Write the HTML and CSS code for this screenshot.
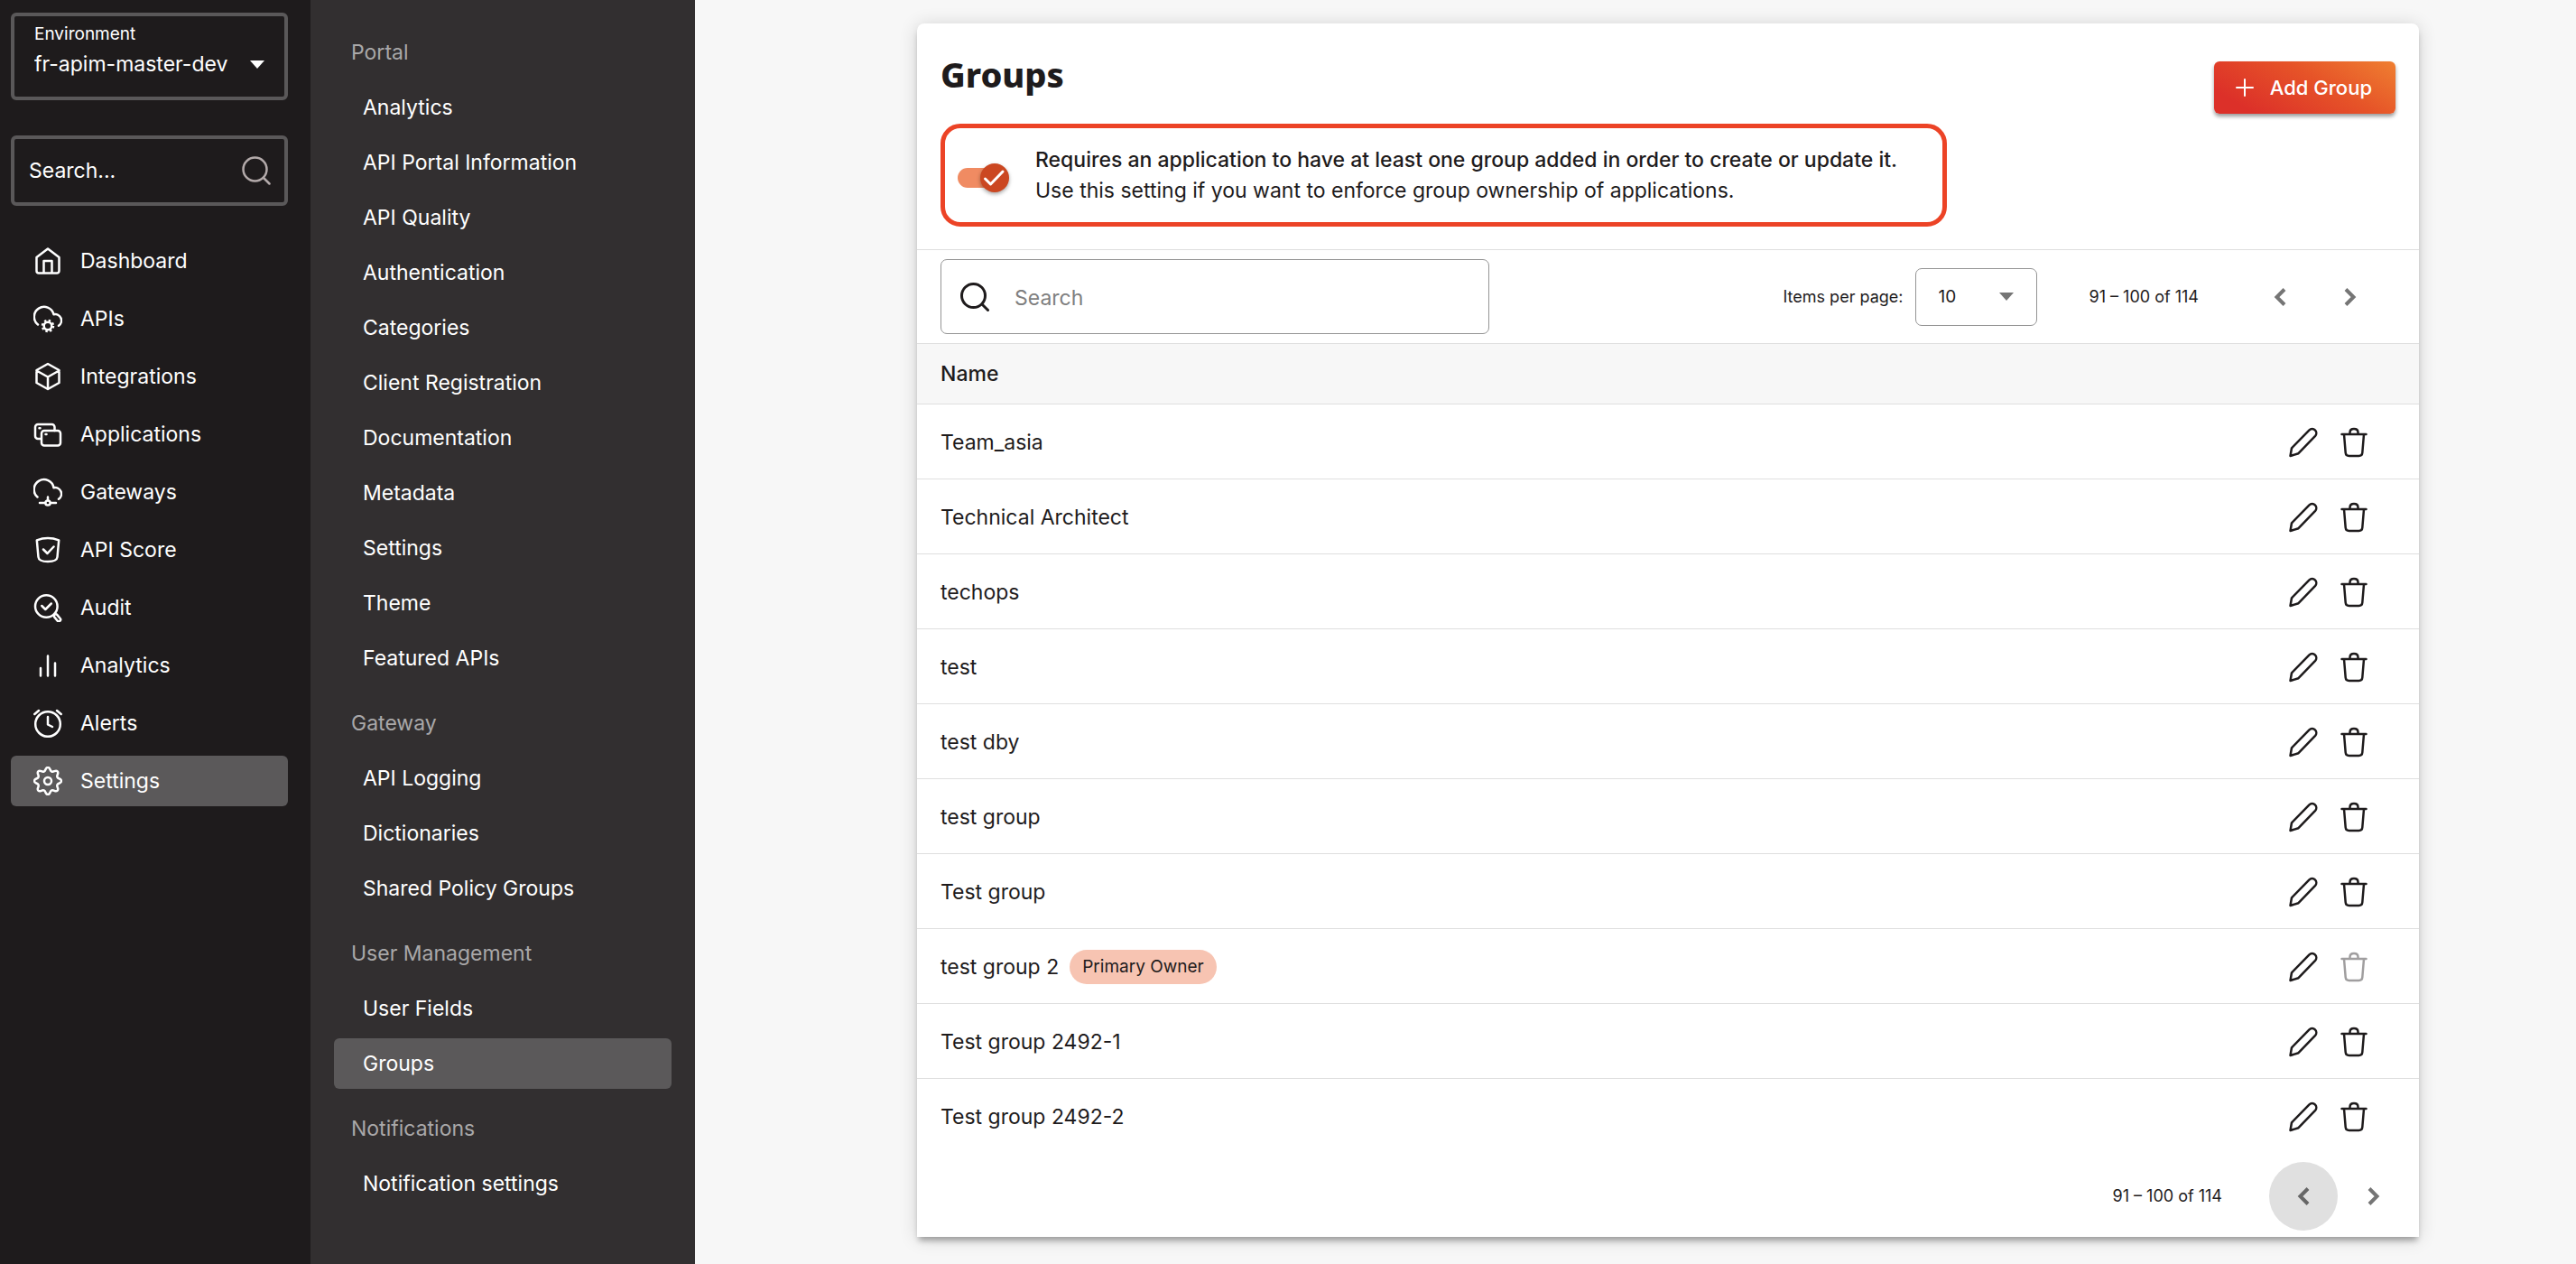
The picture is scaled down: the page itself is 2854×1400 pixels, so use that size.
FILE: index.html
```
<!DOCTYPE html>
<html lang="en">
<head>
<meta charset="utf-8">
<title>Groups</title>
<link rel="stylesheet" href="styles.css">
</head>
<body>
<svg class="sprite" aria-hidden="true">
  <symbol id="i-home" viewBox="0 0 32 32"><path d="M3.5 12 16 2.5 28.5 12v15a2.5 2.5 0 0 1-2.5 2.5H6A2.5 2.5 0 0 1 3.5 27ZM11.5 29.500V16h9v13.500"/></symbol>
  <symbol id="i-api" viewBox="0 0 32 32"><path d="M5 22.500A11 11 0 1 1 22.500 11.200a7 7 0 0 1 5.500 12.600"/><circle cx="16" cy="24" r="4.300"/><circle cx="16" cy="24" r="6" stroke-dasharray="2.350 2.362" stroke-linecap="butt"/></symbol>
  <symbol id="i-cube" viewBox="0 0 32 32"><path d="M16 2 28.500 9v14L16 30 3.500 23V9ZM3.500 9.500 16 16.500l12.500-7M16 16.500V30"/></symbol>
  <symbol id="i-apps" viewBox="0 0 32 32"><path d="M8.500 21H5a3 3 0 0 1-3-3V8a3 3 0 0 1 3-3h15.500a3 3 0 0 1 3 3v4M6.500 9.300h1M13.500 16h1"/><rect x="9" y="12" width="21" height="16.500" rx="3"/></symbol>
  <symbol id="i-gateway" viewBox="0 0 32 32"><path d="M4.500 21.500A11 11 0 1 1 22.500 11.200a7 7 0 0 1 5.500 12.600M7 28h5.500M19.500 28H25M16 21.500v3.500"/><circle cx="16" cy="28" r="2.600"/></symbol>
  <symbol id="i-shield" viewBox="0 0 32 32"><path d="M3.800 5.300Q16 .500 28.200 5.300L26.500 24q-.500 5-10.500 5T5.500 24ZM11 15.500l4.500 4.500 7-7.500"/></symbol>
  <symbol id="i-audit" viewBox="0 0 32 32"><circle cx="14.300" cy="14.500" r="12.300"/><path d="m9.300 14 4 4 6.500-6.500"/><rect x="22" y="25.300" width="9" height="4" rx="2" transform="rotate(50 26.500 27.300)"/></symbol>
  <symbol id="i-bars" viewBox="0 0 32 32"><path d="M8 19v8.500M16 5.500v22M24 13.500v14"/></symbol>
  <symbol id="i-alarm" viewBox="0 0 32 32"><circle cx="16" cy="17" r="13.800"/><path d="M16 9v8.500l5 2.500M1.300 6 6 2M30.700 6 26 2"/></symbol>
  <symbol id="i-gear" viewBox="-16 -16 32 32"><path d="M0-15C3-15 1.920-11.440 4.320-10.440 6.720-9.440 8.490-12.730 10.610-10.610 12.730-8.490 9.440-6.720 10.440-4.320 11.440-1.920 15-3 15 0C15 3 11.440 1.920 10.440 4.320 9.440 6.720 12.730 8.490 10.610 10.610 8.490 12.730 6.720 9.440 4.320 10.440 1.920 11.440 3 15 0 15C-3 15-1.920 11.440-4.320 10.440-6.720 9.440-8.490 12.730-10.610 10.610-12.730 8.490-9.440 6.720-10.440 4.320-11.440 1.920-15 3-15 0C-15-3-11.440-1.920-10.440-4.320-9.440-6.720-12.730-8.490-10.610-10.610-8.490-12.730-6.720-9.440-4.320-10.440-1.920-11.440-3-15 0-15Z"/><circle r="4"/></symbol>
  <symbol id="i-search" viewBox="0 0 32 32"><circle cx="14.500" cy="14.500" r="13"/><path d="m24 24 6.500 6.500"/></symbol>
  <symbol id="i-pencil" viewBox="0 0 32 34"><path d="M1.500 32 3 23.300 22.500 3.400a4.600 4.600 0 0 1 6.600 6.400L10.500 29.200Z"/></symbol>
  <symbol id="i-trash" viewBox="0 0 32 34"><path d="M2.500 8h27M11.500 8V6q0-4 4.500-4t4.500 4v2M5 8l1.700 20.500q.300 3.500 3.800 3.500h11q3.500 0 3.800-3.500L27 8"/></symbol>
  <symbol id="i-prev" viewBox="0 0 20 20"><path d="m15 1.500-8.500 8.500 8.500 8.500"/></symbol>
  <symbol id="i-next" viewBox="0 0 20 20"><path d="m5 1.500 8.500 8.500L5 18.500"/></symbol>
  <symbol id="i-caret" viewBox="0 0 16 9"><path d="M0 0h16L8 9Z" fill="currentColor" stroke="none"/></symbol>
</svg>

<div class="app">
  <aside class="sidebar">
    <label class="env">
      <span class="env-label">Environment</span>
      <span class="env-row">
        <select class="env-select"><option>fr-apim-master-dev</option></select>
        <svg class="caret"><use href="#i-caret"/></svg>
      </span>
    </label>
    <div class="quick-search">
      <input class="quick-input" type="text" aria-label="Search" placeholder="Search...">
      <svg class="icon quick-icon"><use href="#i-search"/></svg>
    </div>
    <nav class="menu">
      <a class="menu-item" href="#"><svg class="icon"><use href="#i-home"/></svg>Dashboard</a>
      <a class="menu-item" href="#"><svg class="icon"><use href="#i-api"/></svg>APIs</a>
      <a class="menu-item" href="#"><svg class="icon"><use href="#i-cube"/></svg>Integrations</a>
      <a class="menu-item" href="#"><svg class="icon"><use href="#i-apps"/></svg>Applications</a>
      <a class="menu-item" href="#"><svg class="icon"><use href="#i-gateway"/></svg>Gateways</a>
      <a class="menu-item" href="#"><svg class="icon"><use href="#i-shield"/></svg>API Score</a>
      <a class="menu-item" href="#"><svg class="icon"><use href="#i-audit"/></svg>Audit</a>
      <a class="menu-item" href="#"><svg class="icon"><use href="#i-bars"/></svg>Analytics</a>
      <a class="menu-item" href="#"><svg class="icon"><use href="#i-alarm"/></svg>Alerts</a>
      <a class="menu-item active" href="#"><svg class="icon"><use href="#i-gear"/></svg>Settings</a>
    </nav>
  </aside>

  <nav class="subnav">
    <section class="subnav-group">
      <h2 class="subnav-title">Portal</h2>
      <a class="subnav-item" href="#">Analytics</a>
      <a class="subnav-item" href="#">API Portal Information</a>
      <a class="subnav-item" href="#">API Quality</a>
      <a class="subnav-item" href="#">Authentication</a>
      <a class="subnav-item" href="#">Categories</a>
      <a class="subnav-item" href="#">Client Registration</a>
      <a class="subnav-item" href="#">Documentation</a>
      <a class="subnav-item" href="#">Metadata</a>
      <a class="subnav-item" href="#">Settings</a>
      <a class="subnav-item" href="#">Theme</a>
      <a class="subnav-item" href="#">Featured APIs</a>
    </section>
    <section class="subnav-group">
      <h2 class="subnav-title">Gateway</h2>
      <a class="subnav-item" href="#">API Logging</a>
      <a class="subnav-item" href="#">Dictionaries</a>
      <a class="subnav-item" href="#">Shared Policy Groups</a>
    </section>
    <section class="subnav-group">
      <h2 class="subnav-title">User Management</h2>
      <a class="subnav-item" href="#">User Fields</a>
      <a class="subnav-item active" href="#">Groups</a>
    </section>
    <section class="subnav-group">
      <h2 class="subnav-title">Notifications</h2>
      <a class="subnav-item" href="#">Notification settings</a>
    </section>
  </nav>

  <main class="main">
    <div class="card">
      <header class="card-header">
        <div>
          <h1 class="title">Groups</h1>
          <label class="requirement">
            <span class="switch">
              <input class="switch-input" type="checkbox" checked>
              <svg class="switch-thumb" viewBox="0 0 32 32"><circle cx="16" cy="16" r="16" fill="#cb4721" stroke="none"/><path d="m5.500 17 6 6L25 9" fill="none" stroke="#fff" stroke-width="3"/></svg>
            </span>
            <span class="requirement-text"><span class="strong">Requires an application to have at least one group added in order to create or update it.</span><span>Use this setting if you want to enforce group ownership of applications.</span></span>
          </label>
        </div>
        <button class="add-button" type="button"><svg class="plus" viewBox="0 0 20 20"><path d="M10 1v18M1 10h18"/></svg>Add Group</button>
      </header>

      <div class="toolbar">
        <div class="search">
          <svg class="icon search-icon"><use href="#i-search"/></svg>
          <input class="search-input" type="text" aria-label="Search groups" placeholder="Search">
        </div>
        <div class="pager pager-top">
          <label class="page-label" for="page-size">Items per page:</label>
          <span class="page-size">
            <select class="page-select" id="page-size"><option>10</option></select>
            <svg class="caret"><use href="#i-caret"/></svg>
          </span>
          <span class="range">91 – 100 of 114</span>
          <button class="page-button" type="button" aria-label="Previous page"><svg class="chevron"><use href="#i-prev"/></svg></button>
          <button class="page-button" type="button" aria-label="Next page"><svg class="chevron"><use href="#i-next"/></svg></button>
        </div>
      </div>

      <table class="groups">
        <thead><tr><th>Name</th><th class="actions"></th></tr></thead>
        <tbody>
          <tr><td>Team_asia</td><td class="actions"><button class="act" type="button" aria-label="Edit"><svg><use href="#i-pencil"/></svg></button><button class="act" type="button" aria-label="Delete"><svg><use href="#i-trash"/></svg></button></td></tr>
          <tr><td>Technical Architect</td><td class="actions"><button class="act" type="button" aria-label="Edit"><svg><use href="#i-pencil"/></svg></button><button class="act" type="button" aria-label="Delete"><svg><use href="#i-trash"/></svg></button></td></tr>
          <tr><td>techops</td><td class="actions"><button class="act" type="button" aria-label="Edit"><svg><use href="#i-pencil"/></svg></button><button class="act" type="button" aria-label="Delete"><svg><use href="#i-trash"/></svg></button></td></tr>
          <tr><td>test</td><td class="actions"><button class="act" type="button" aria-label="Edit"><svg><use href="#i-pencil"/></svg></button><button class="act" type="button" aria-label="Delete"><svg><use href="#i-trash"/></svg></button></td></tr>
          <tr><td>test dby</td><td class="actions"><button class="act" type="button" aria-label="Edit"><svg><use href="#i-pencil"/></svg></button><button class="act" type="button" aria-label="Delete"><svg><use href="#i-trash"/></svg></button></td></tr>
          <tr><td>test group</td><td class="actions"><button class="act" type="button" aria-label="Edit"><svg><use href="#i-pencil"/></svg></button><button class="act" type="button" aria-label="Delete"><svg><use href="#i-trash"/></svg></button></td></tr>
          <tr><td>Test group</td><td class="actions"><button class="act" type="button" aria-label="Edit"><svg><use href="#i-pencil"/></svg></button><button class="act" type="button" aria-label="Delete"><svg><use href="#i-trash"/></svg></button></td></tr>
          <tr><td><span class="name">test group 2<span class="badge">Primary Owner</span></span></td><td class="actions"><button class="act" type="button" aria-label="Edit"><svg><use href="#i-pencil"/></svg></button><button class="act" type="button" aria-label="Delete" disabled><svg><use href="#i-trash"/></svg></button></td></tr>
          <tr><td>Test group 2492-1</td><td class="actions"><button class="act" type="button" aria-label="Edit"><svg><use href="#i-pencil"/></svg></button><button class="act" type="button" aria-label="Delete"><svg><use href="#i-trash"/></svg></button></td></tr>
          <tr><td>Test group 2492-2</td><td class="actions"><button class="act" type="button" aria-label="Edit"><svg><use href="#i-pencil"/></svg></button><button class="act" type="button" aria-label="Delete"><svg><use href="#i-trash"/></svg></button></td></tr>
        </tbody>
      </table>

      <footer class="pager pager-bottom">
        <span class="range">91 – 100 of 114</span>
        <button class="page-button focused" type="button" aria-label="Previous page"><svg class="chevron"><use href="#i-prev"/></svg></button>
        <button class="page-button" type="button" aria-label="Next page"><svg class="chevron"><use href="#i-next"/></svg></button>
      </footer>
    </div>
  </main>
</div>
</body>
</html>
```
FILE: styles.css
```
* { box-sizing: border-box; }

body {
  margin: 0;
  background: #f7f7f7;
  color: #1e1b1c;
  font-family: Inter, "Liberation Sans", sans-serif;
  font-size: 23px;
  line-height: 34px;
}

a { color: inherit; text-decoration: none; }
button, input, select { font: inherit; color: inherit; margin: 0; }
button { border: 0; padding: 0; background: none; cursor: pointer; }
select { appearance: none; border: 0; padding: 0; background: transparent; }

svg { display: block; fill: none; stroke: currentColor; stroke-width: 2.5; stroke-linecap: round; stroke-linejoin: round; flex: none; }
.sprite { position: absolute; width: 0; height: 0; }
.icon { width: 32px; height: 32px; }
.caret { width: 16px; height: 9px; }

.app { display: flex; min-height: 100vh; }

/* Primary sidebar */
.sidebar { flex: 0 0 344px; min-width: 0; padding: 14px 25px 14px 12px; background: #1e1b1c; color: #fff; }
.env { display: block; padding: 4px 22px 19px; border: 4px solid #5a5859; border-radius: 6px; margin-bottom: 39px; }
.env-label { display: block; font-size: 19px; line-height: 32px; }
.env-row { display: flex; align-items: center; justify-content: space-between; }
.env-select { flex: 1; min-width: 0; height: 34px; }
.quick-search { display: flex; align-items: center; height: 78px; padding: 0 15px 0 16px; border: 4px solid #5a5859; border-radius: 6px; margin-bottom: 33px; }
.quick-input { flex: 1; min-width: 0; border: 0; padding: 0; background: transparent; }
.quick-input::placeholder { color: #fff; opacity: 1; }
.quick-icon { color: #b3aaaa; }
.menu { display: flex; flex-direction: column; gap: 8px; }
.menu-item { display: flex; align-items: center; gap: 20px; height: 56px; padding: 0 25px; border-radius: 6px; }
.active { background: #5b595a; }

/* Settings navigation */
.subnav { flex: 0 0 426px; display: flex; flex-direction: column; gap: 16px; padding: 30px 26px; background: #322f30; color: #fff; }
.subnav-group { display: flex; flex-direction: column; gap: 5px; }
.subnav-title { margin: 0; padding: 0 19px; font-size: 23px; font-weight: 400; line-height: 56px; color: #a9a8a9; }
.subnav-item { padding: 0 32px; border-radius: 6px; line-height: 56px; }

/* Content */
.main { flex: 1; min-width: 0; padding: 26px 174px 30px 246px; }
.card { background: #fff; border-radius: 8px 8px 0 0; box-shadow: 0 6px 6px -2px rgba(0,0,0,.3), 0 2px 20px rgba(0,0,0,.16); }
.card-header { display: flex; justify-content: space-between; align-items: flex-start; padding: 26px 26px 25px; border-bottom: 1px solid #dfdfdf; }
.title { margin: 0 0 25px; font-family: "Noto Sans", "Open Sans", sans-serif; font-size: 38px; font-weight: 800; line-height: 60px; }
.requirement { display: flex; align-items: center; gap: 29px; width: 1115px; max-width: 100%; height: 114px; padding: 0 28px 0 14px; border: 5px solid #ec4326; border-radius: 22px; }
.requirement-text { display: flex; flex-direction: column; }
.strong { font-weight: 500; }
.switch { position: relative; flex: none; width: 57px; height: 32px; margin-top: 6px; display: flex; align-items: center; }
.switch-input { appearance: none; width: 52px; height: 22px; border-radius: 11px; background: #f08b62; }
.switch-thumb { position: absolute; right: 0; top: 0; width: 32px; height: 32px; filter: drop-shadow(0 2px 2px rgba(0,0,0,.35)); }
.add-button { display: flex; align-items: center; gap: 18px; height: 58px; margin-top: 16px; padding: 0 26px 0 24px; border-radius: 6px; background: linear-gradient(30deg, #dc3029 15%, #e65428 60%, #ef7f31); color: #fff; font-size: 22px; font-weight: 500; box-shadow: 0 3px 4px rgba(0,0,0,.4); }
.plus { width: 20px; height: 20px; stroke-width: 2; }

.toolbar { display: flex; align-items: center; justify-content: space-between; padding: 10px 38px 10px 26px; border-bottom: 1px solid #dfdfdf; }
.search { display: flex; align-items: center; gap: 28px; width: 608px; height: 83px; padding: 0 21px; border: 1px solid #949494; border-radius: 7px; }
.search-icon { stroke-width: 3; }
.search-input { flex: 1; min-width: 0; border: 0; padding: 2px 0 0; background: transparent; }
.search-input::placeholder { color: #7f7f7f; opacity: 1; }

.pager { display: flex; align-items: center; font-size: 18px; }
.page-label { margin-right: 13px; }
.page-size { display: flex; align-items: center; width: 135px; height: 64px; padding: 0 25px; border: 1px solid #949494; border-radius: 7px; font-size: 19px; }
.page-size .caret { color: #757575; }
.page-select { flex: 1; min-width: 0; }
.pager-top .range { margin-left: 58px; }
.range { margin-right: 52px; }
.page-button { display: grid; place-items: center; width: 76px; height: 76px; border-radius: 50%; color: #757575; }
.page-button + .page-button { margin-left: 2px; }
.focused { background: #e0e0e0; color: #666; }
.chevron { width: 20px; height: 20px; stroke-width: 4; stroke-linecap: butt; stroke-linejoin: miter; }

.groups { width: 100%; border-spacing: 0; }
.groups th { height: 67px; padding: 0 26px; background: #f7f7f7; border-bottom: 1px solid #dfdfdf; text-align: left; font-weight: 500; }
.groups td { height: 83px; padding: 2px 26px 0; border-bottom: 1px solid #dfdfdf; }
.groups tr:last-child td { border-bottom-color: transparent; }
.groups .actions { width: 200px; padding: 2px 44px 0 0; text-align: right; white-space: nowrap; }
.act { display: inline-grid; place-items: center; width: 56px; height: 56px; vertical-align: middle; }
.act svg { width: 32px; height: 34px; }
.act:disabled { opacity: .42; }
.name { display: flex; align-items: center; gap: 12px; }
.badge { padding: 0 14px; border-radius: 19px; background: #f7c4b2; font-size: 19px; line-height: 38px; }
.pager-bottom { justify-content: flex-end; padding: 9px 12px 7px 26px; }
```
